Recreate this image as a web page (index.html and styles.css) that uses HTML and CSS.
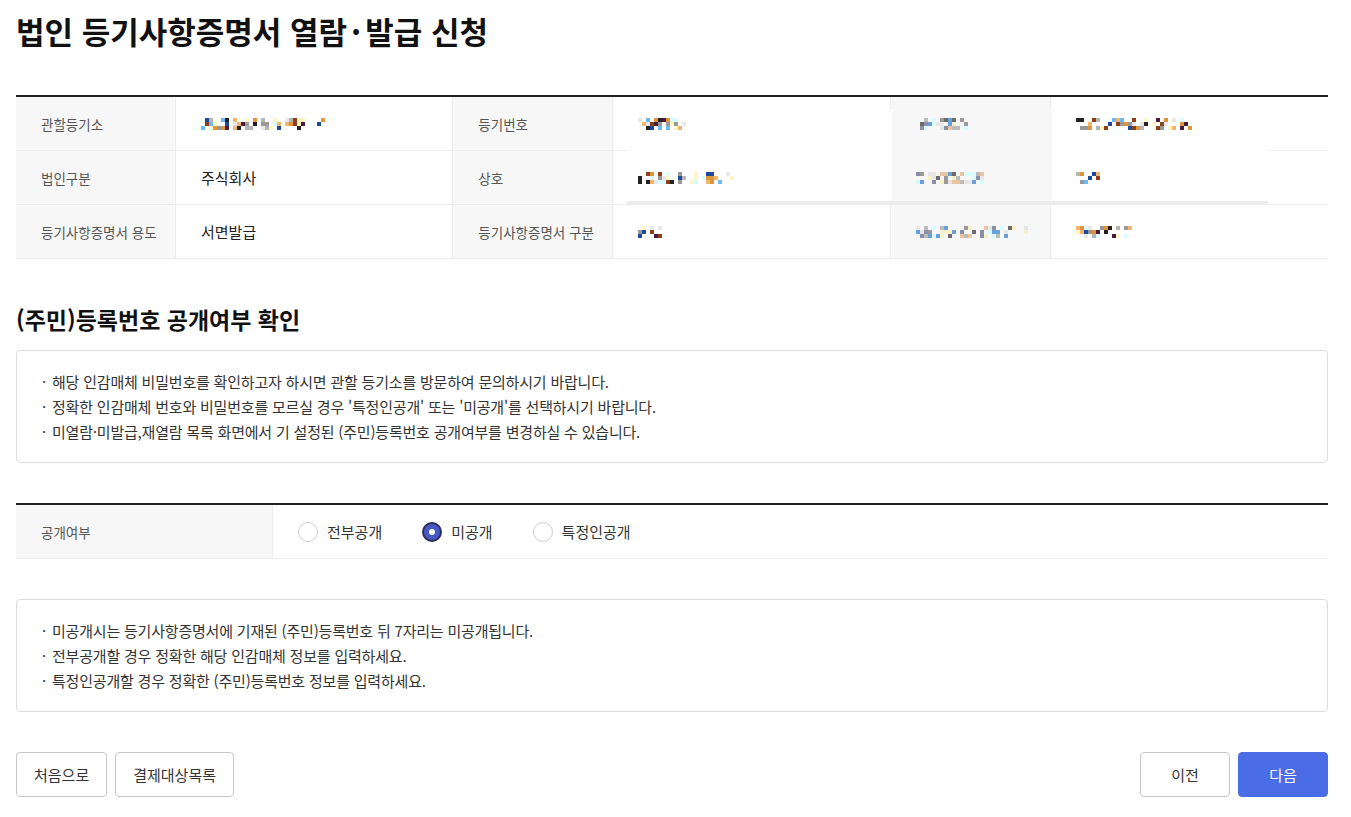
FILE: index.html
```html
<!DOCTYPE html>
<html lang="ko">
<head>
    <meta charset="UTF-8">
    <meta name="viewport" content="width=device-width, initial-scale=1.0">
    <title>법인 등기사항증명서 열람·발급 신청</title>
    <link rel="stylesheet" href="styles.css">
</head>
<body>
<div class="page">
    <h1 class="page-title">법인 등기사항증명서 열람<span class="sep">·</span>발급 신청</h1>

    <div class="info-table">
        <div class="cell label">관할등기소</div>
        <div class="cell value"><span class="mosaic" data-cols="31" data-seed="3"></span></div>
        <div class="cell label">등기번호</div>
        <div class="cell value"><span class="mosaic" data-cols="12" data-seed="11"></span></div>
        <div class="cell label"><span class="mosaic" data-cols="13" data-seed="21" data-pal="gray"></span></div>
        <div class="cell value"><span class="mosaic" data-cols="29" data-seed="7"></span></div>

        <div class="cell label">법인구분</div>
        <div class="cell value">주식회사</div>
        <div class="cell label">상호</div>
        <div class="cell value"><span class="mosaic" data-cols="24" data-seed="5"></span></div>
        <div class="cell label"><span class="mosaic" data-cols="17" data-seed="41" data-pal="gray"></span></div>
        <div class="cell value"><span class="mosaic" data-cols="6" data-seed="17"></span></div>

        <div class="cell label">등기사항증명서 용도</div>
        <div class="cell value">서면발급</div>
        <div class="cell label">등기사항증명서 구분</div>
        <div class="cell value"><span class="mosaic" data-cols="6" data-seed="29"></span></div>
        <div class="cell label"><span class="mosaic" data-cols="28" data-seed="33" data-pal="gray"></span></div>
        <div class="cell value"><span class="mosaic" data-cols="14" data-seed="9"></span></div>

        <!-- 블러 처리된 영역 -->
        <div class="mask"><div class="mask-col"></div></div>
    </div>

    <h2 class="section-title">(주민)등록번호 공개여부 확인</h2>

    <ul class="notice">
        <li>해당 인감매체 비밀번호를 확인하고자 하시면 관할 등기소를 방문하여 문의하시기 바랍니다.</li>
        <li>정확한 인감매체 번호와 비밀번호를 모르실 경우 '특정인공개' 또는 '미공개'를 선택하시기 바랍니다.</li>
        <li>미열람·미발급,재열람 목록 화면에서 기 설정된 (주민)등록번호 공개여부를 변경하실 수 있습니다.</li>
    </ul>

    <div class="option-table">
        <div class="cell label">공개여부</div>
        <div class="cell options">
            <label class="radio"><span class="dot"></span>전부공개</label>
            <label class="radio checked"><span class="dot"></span>미공개</label>
            <label class="radio"><span class="dot"></span>특정인공개</label>
        </div>
    </div>

    <ul class="notice">
        <li>미공개시는 등기사항증명서에 기재된 (주민)등록번호 뒤 7자리는 미공개됩니다.</li>
        <li>전부공개할 경우 정확한 해당 인감매체 정보를 입력하세요.</li>
        <li>특정인공개할 경우 정확한 (주민)등록번호 정보를 입력하세요.</li>
    </ul>

    <div class="btn-area">
        <div class="btn-group">
            <button class="btn">처음으로</button>
            <button class="btn">결제대상목록</button>
        </div>
        <div class="btn-group">
            <button class="btn">이전</button>
            <button class="btn primary">다음</button>
        </div>
    </div>
</div>
<script src="mosaic.js"></script>
</body>
</html>
```

FILE: styles.css
```css
* {
    box-sizing: border-box;
}
body {
    margin: 0;
    font-family: "Noto Sans CJK KR", "Noto Sans", sans-serif;
    color: #222;
    background: #fff;
}
.page {
    width: 1312px;
    margin-left: 16px;
}
.page-title {
    margin: 10px 0 0;
    font-size: 31px;
    line-height: 42px;
    font-weight: 700;
    color: #111;
}
.page-title .sep {
    padding: 0 4px;
}

.info-table {
    position: relative;
    margin-top: 43px;
    border-top: 2px solid #222;
    display: grid;
    grid-template-columns: 160px 1fr 160px 1fr 160px 1fr;
}
.cell {
    height: 54px;
    display: flex;
    align-items: center;
    padding-left: 25px;
    border-bottom: 1px solid #ececec;
    border-right: 1px solid #ececec;
    font-size: 14px;
}
.cell > * {
    position: relative;
    z-index: 1;
}
.info-table .cell:nth-child(6n) {
    border-right: none;
}
.label {
    background: #f7f7f7;
    color: #555;
    font-size: 13.5px;
}
.value {
    font-size: 15px;
    color: #222;
}
.mask {
    position: absolute;
    left: 611px;
    top: 12px;
    width: 641px;
    height: 96px;
    background: #fff;
    border-bottom: 4px solid #ececec;
}
.mask-col {
    margin-left: 265px;
    width: 160px;
    height: 100%;
    background: #f7f7f7;
}
.mosaic {
    display: inline-grid;
    grid-auto-flow: column;
    grid-template-rows: repeat(3, 4px);
    grid-auto-columns: 4px;
}

.section-title {
    margin: 44px 0 0;
    font-size: 23px;
    line-height: 32px;
    font-weight: 700;
    color: #111;
}

.notice {
    list-style: none;
    margin: 15px 0 0;
    padding: 18px 20px 18px 25px;
    border: 1px solid #dcdcdc;
    border-radius: 4px;
    font-size: 15px;
    letter-spacing: -0.2px;
    line-height: 25px;
    color: #333;
}
.notice li::before {
    content: "·";
    margin-right: 6px;
}
.option-table + .notice {
    margin-top: 40px;
}

.option-table {
    margin-top: 40px;
    border-top: 2px solid #222;
    display: grid;
    grid-template-columns: 257px 1fr;
}
.option-table .cell {
    height: 54px;
}
.option-table .options {
    border-right: none;
    gap: 40px;
    font-size: 15px;
    color: #333;
}
.radio {
    display: flex;
    align-items: center;
    gap: 9px;
}
.dot {
    width: 20px;
    height: 20px;
    border-radius: 50%;
    border: 1px solid #cfcfcf;
    background: #fff;
}
.radio.checked .dot {
    border: 2px solid #2a2f55;
    background: #4759c8;
    position: relative;
}
.radio.checked .dot::after {
    content: "";
    position: absolute;
    left: 5px;
    top: 5px;
    width: 6px;
    height: 6px;
    border-radius: 50%;
    background: #fff;
}

.btn-area {
    margin-top: 40px;
    display: flex;
    justify-content: space-between;
}
.btn-group {
    display: flex;
    gap: 8px;
}
.btn {
    height: 45px;
    min-width: 90px;
    padding: 0 17px;
    border: 1px solid #c8c8c8;
    border-radius: 4px;
    background: #fff;
    font-family: inherit;
    font-size: 15px;
    color: #333;
}
.btn.primary {
    background: #4a6de6;
    border-color: #4a6de6;
    color: #fff;
}
```

FILE: mosaic.js
```js
// 개인정보 가림용 모자이크 블록
var palettes = {
    warm: ['#4a1c3c', '#e0953c', '#f2b66a', '#1f4a9a', '#6cbaf5', '#8b3f1a', '#222', '#999', '#fff6c8', '#d9fbff', '#e8e8e8', '#b5b5b5'],
    gray: ['#999', '#bbb', '#e6e6e6', '#6b6b6b', '#e8c4a0', '#d9fbff', '#f4f0c8', '#6a9fd8', '#8a8fa8']
};

document.querySelectorAll('.mosaic').forEach(function (el) {
    var cols = +el.dataset.cols;
    var seed = +el.dataset.seed;
    var pal = palettes[el.dataset.pal || 'warm'];
    function rand() {
        seed = (seed * 9301 + 49297) % 233280;
        return seed / 233280;
    }
    for (var i = 0; i < cols * 3; i++) {
        var px = document.createElement('span');
        if (rand() > 0.42) {
            px.style.background = pal[Math.floor(rand() * pal.length)];
        }
        el.appendChild(px);
    }
});
```
